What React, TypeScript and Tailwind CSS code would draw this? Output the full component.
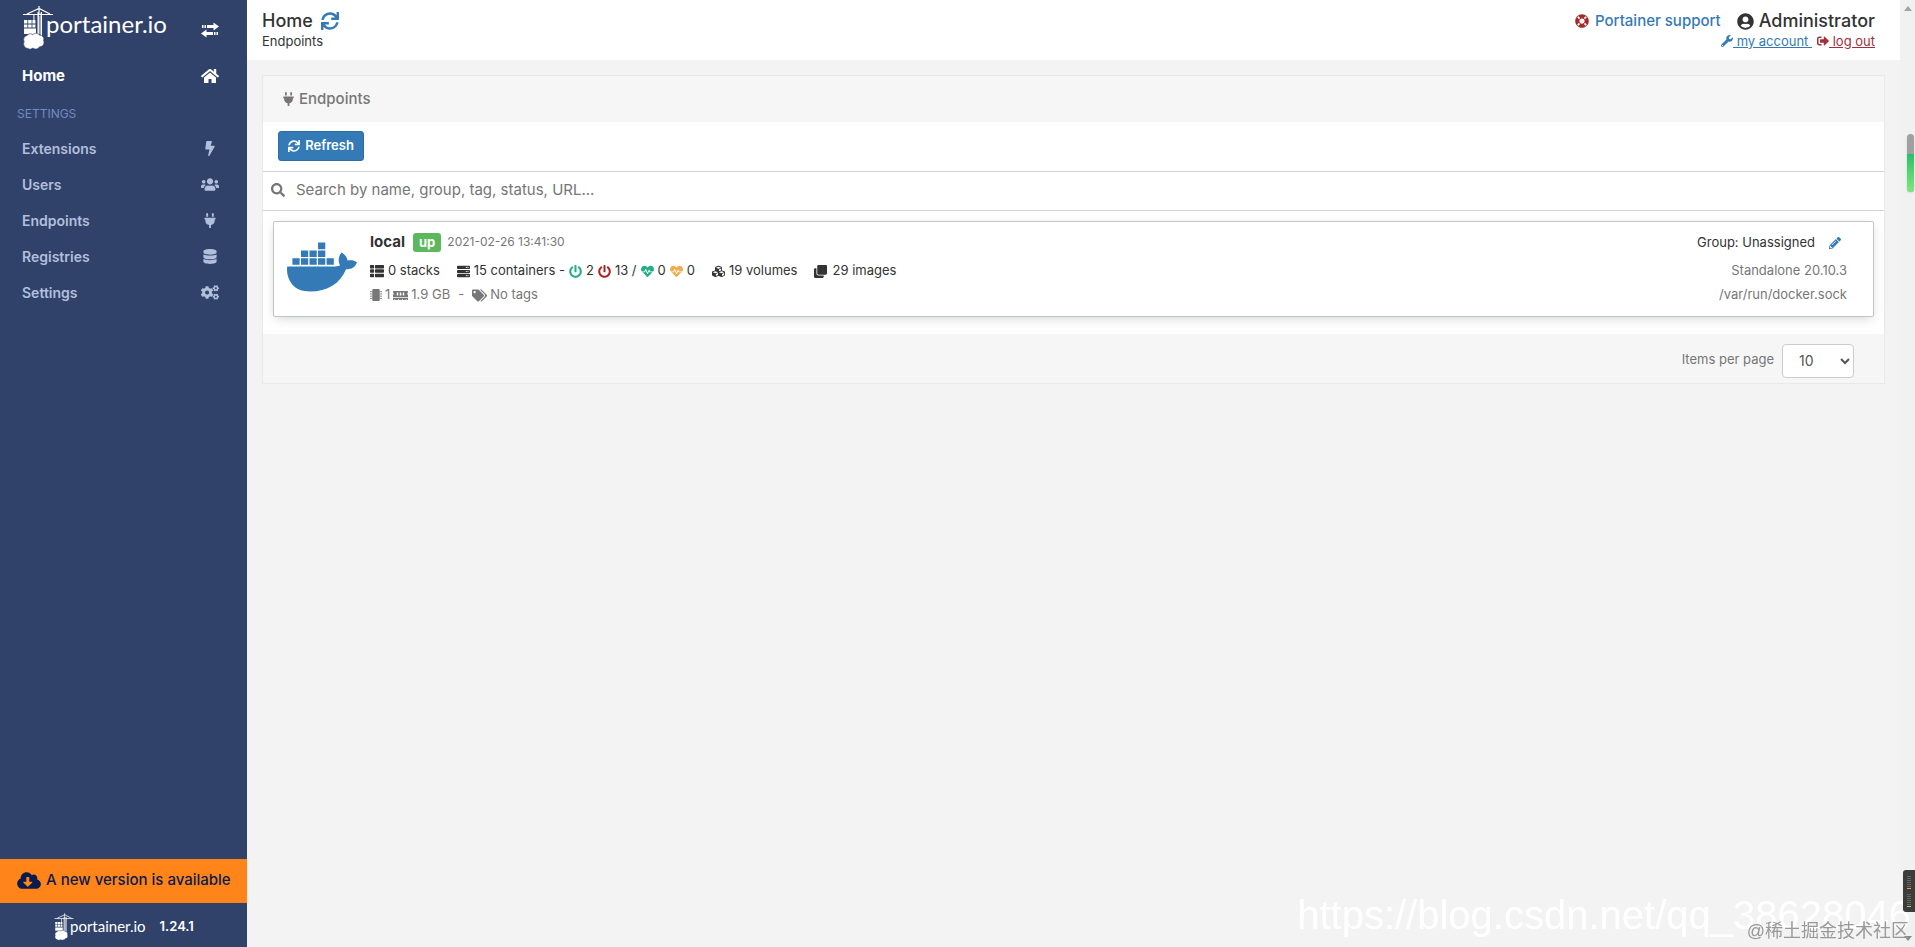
import React from "react";
import {
	FaBolt,
	FaClone,
	FaCloudDownloadAlt,
	FaCogs,
	FaCubes,
	FaDatabase,
	FaDocker,
	FaHeartbeat,
	FaHome,
	FaLifeRing,
	FaMemory,
	FaMicrochip,
	FaPencilAlt,
	FaPlug,
	FaPowerOff,
	FaSearch,
	FaServer,
	FaSignOutAlt,
	FaSync,
	FaTags,
	FaThList,
	FaUserCircle,
	FaUsers,
	FaWrench,
} from "react-icons/fa";

const settingsLinks = [
	{ label: "Extensions", icon: FaBolt },
	{ label: "Users", icon: FaUsers },
	{ label: "Endpoints", icon: FaPlug },
	{ label: "Registries", icon: FaDatabase },
	{ label: "Settings", icon: FaCogs },
];

// Crane, container stack and cloud
function CraneMark({ className }: { className?: string }) {
	return (
		<svg viewBox="0 0 32 44" className={className} fill="#fff" aria-hidden="true">
			<path d="M17 0v8M1 8.5h30M5 8 17 2.5 28 8" stroke="#fff" strokeWidth="1.2" fill="none" />
			<path d="M15.5 6h1.4v24h-1.4zM18.6 6H20v24h-1.4z" />
			<path d="M17 10h1.6v18H17z" opacity="0.45" />
			<path d="M11.4 9h1v5h-1z" />
			<path d="M2 14h3.4v3.6H2zM6.2 14h3.4v3.6H6.2zM10.4 14h3v3.6h-3zM2 18.4h3.4v3.2H2zM6.2 18.4h3.4v3.2H6.2zM10.4 18.4h3v3.2h-3zM2 22.6h12V28H2z" />
			<path
				d="M6 42.500a4.600 4.600 0 0 1-3.800-6.800A4.300 4.300 0 0 1 5 29.400c1.600-2 4.200-2 5.800-.9 2.200-1.900 5.400-1.500 6.800.7 3.200 0 4.900 2.700 3.900 5.200 1.500 3.200-.5 6.500-3.900 6.300-1.700 2.800-5 2.700-6.700 1.300-1.500 1.300-3.500 1.500-4.900.5z"
				stroke="#30426a"
				strokeWidth="0.6"
			/>
		</svg>
	);
}

function TransferIcon() {
	return (
		<svg viewBox="0 0 18 16" className="w-[18px] h-[16px]" fill="#fff" aria-hidden="true">
			<path d="M1 3h1.5v3H1zM3.5 3H5v3H3.5zM6 3h6.500V.5L18 4.500l-5.500 4V6H6z" />
			<path d="M17 10h-1.500v3H17zM14.500 10H13v3h1.500zM12 10H5.500V7.500L0 11.500l5.500 4V13H12z" />
		</svg>
	);
}

function Sidebar() {
	return (
		<nav className="w-[247px] shrink-0 flex flex-col bg-[#30426a] text-[#b2bfdc]">
			<div className="h-[58px] pl-[22px] pr-7 flex items-start justify-between text-white">
				<a href="#" className="flex items-start pt-1.5">
					<CraneMark className="w-[32px] h-[44px]" />
					<span className="-ml-2 text-[24px] leading-[36px] font-['Lato',sans-serif]">portainer.io</span>
				</a>
				<button type="button" aria-label="Toggle sidebar" className="mt-[22px]">
					<TransferIcon />
				</button>
			</div>
			<a href="#" className="h-9 pl-[22px] pr-7 flex items-center justify-between text-[15px] font-bold text-white">
				Home
				<FaHome className="w-[18px] h-[16px]" />
			</a>
			<div className="h-9 pt-1 pl-[17px] flex items-center text-[12px] text-[#738bc0]">SETTINGS</div>
			{settingsLinks.map(({ label, icon: Icon }) => (
				<a
					key={label}
					href="#"
					className="h-9 pl-[22px] pr-7 flex items-center justify-between text-[14px] font-semibold"
				>
					{label}
					<span className="w-[18px] flex justify-center">
						<Icon className="w-[18px] h-[15px]" />
					</span>
				</a>
			))}

			<div className="mt-auto">
				<a href="#" className="h-11 pb-0.5 pl-[17px] flex items-center gap-[5px] bg-[#ff851b] text-[15px] font-medium text-[#0a1b4d]">
					<FaCloudDownloadAlt className="w-[24px] h-[19px] shrink-0" />
					<span className="whitespace-nowrap">A new version is available</span>
				</a>
				<div className="h-11 pl-[54px] flex items-start text-white">
					<CraneMark className="mt-2.5 w-[20px] h-[28px]" />
					<span className="-ml-1 text-[15px] leading-[46px] font-['Lato',sans-serif]">portainer.io</span>
					<span className="ml-3.5 text-[13px] leading-[46px] font-semibold">1.24.1</span>
				</div>
			</div>
		</nav>
	);
}

function PageHeader() {
	return (
		<header className="h-[60px] px-[15px] pr-[25px] flex justify-between bg-white">
			<div className="pt-2">
				<h1 className="flex items-center gap-2 text-[18px] leading-[26px] font-medium">
					Home
					<a href="#" aria-label="Reload">
						<FaSync className="w-[18px] h-[18px] text-[#337ab7]" />
					</a>
				</h1>
				<p className="text-[13px] leading-[14px]">Endpoints</p>
			</div>
			<div className="pt-2 flex flex-col items-end">
				<div className="flex items-center gap-4">
					<a href="#" className="flex items-center gap-1.5 text-[15px] leading-[26px] font-medium text-[#337ab7]">
						<FaLifeRing className="w-[14px] h-[14px] text-[#a52a2a]" />
						Portainer support
					</a>
					<div className="flex items-center gap-[5px] text-[18px] leading-[26px] font-medium">
						<FaUserCircle className="w-[17px] h-[17px]" />
						Administrator
					</div>
				</div>
				<div className="flex gap-[5px] text-[13px] leading-[14px]">
					<a href="#" className="flex items-center text-[#337ab7] underline">
						<FaWrench className="w-[12px] h-[12px]" />
						<span className="whitespace-pre"> my account </span>
					</a>
					<a href="#" className="flex items-center text-[#a33038] underline">
						<FaSignOutAlt className="w-[12px] h-[12px]" />
						<span className="whitespace-pre"> log out</span>
					</a>
				</div>
			</div>
		</header>
	);
}

function EndpointItem() {
	return (
		<article className="h-[96px] pl-[13px] pr-[26px] pb-1 flex items-center bg-white border border-[#c4c4c4] rounded-[2px] shadow-[0_3px_10px_-2px_rgba(161,170,166,0.5)]">
			<FaDocker className="w-[70px] h-[70px] shrink-0 text-[#337ab7]" />
			<div className="ml-[13px] grow flex flex-col text-[13px] text-[#333]">
				<div className="h-[28px] pb-0.5 flex items-center">
					<span className="text-[15px] font-bold">local</span>
					<span className="ml-2 px-1.5 h-[19px] rounded-[3px] bg-[#5cb85c] text-[13px] leading-[19px] font-bold text-white">up</span>
					<span className="ml-1.5 text-[12px] text-[#777]">2021-02-26 13:41:30</span>
				</div>
				<div className="h-[28px] flex items-center gap-[17px]">
					<span className="flex items-center gap-1">
						<FaThList className="w-[14px] h-[14px]" />0 stacks
					</span>
					<span className="flex items-center gap-1">
						<FaServer className="w-[13px] h-[13px]" />
						<span>15 containers -</span>
						<FaPowerOff className="w-[13px] h-[13px] text-[#23ae89]" />2
						<FaPowerOff className="w-[13px] h-[13px] text-[#ae2323]" />13 /
						<FaHeartbeat className="w-[13px] h-[13px] text-[#23ae89]" />0
						<FaHeartbeat className="w-[13px] h-[13px] text-[#f0ad4e]" />0
					</span>
					<span className="flex items-center gap-1">
						<FaCubes className="w-[13px] h-[13px]" />19 volumes
					</span>
					<span className="flex items-center gap-[5px]">
						<FaClone className="w-[13px] h-[13px]" />29 images
					</span>
				</div>
				<div className="h-5 flex items-center gap-[3px] text-[13px] text-[#777]">
					<FaMicrochip className="w-[12px] h-[12px]" />1
					<FaMemory className="w-[15px] h-[13px]" />1.9 GB
					<span className="px-[5px]">-</span>
					<FaTags className="w-[15px] h-[13px]" />No tags
				</div>
			</div>
			<div className="flex flex-col items-end text-[13px] text-[#777]">
				<div className="h-[28px] pr-1.5 flex items-center gap-3.5 text-[#333]">
					Group: Unassigned
					<a href="#" aria-label="Edit endpoint">
						<FaPencilAlt className="w-[12px] h-[12px] text-[#337ab7]" />
					</a>
				</div>
				<div className="h-[28px] flex items-center">Standalone 20.10.3</div>
				<div className="h-5 flex items-center">/var/run/docker.sock</div>
			</div>
		</article>
	);
}

function EndpointsWidget() {
	return (
		<section className="mx-[15px] mt-[15px] border border-[#e9e9e9] bg-white">
			<h2 className="h-[46px] pl-5 flex items-center gap-[5px] bg-[#f6f6f6] text-[15px] font-medium text-[#767676]">
				<FaPlug className="w-[11px] h-[14px]" />
				Endpoints
			</h2>
			<div className="h-[50px] pb-0.5 pl-[15px] flex items-center border-b border-[#d2d3d4]">
				<button
					type="button"
					className="h-[30px] w-[86px] flex items-center justify-center gap-[5px] rounded-[3px] border border-[#2e6da4] bg-[#337ab7] text-[13px] font-semibold text-white"
				>
					<FaSync className="w-[12px] h-[12px]" />
					Refresh
				</button>
			</div>
			<div className="h-[39px] pb-0.5 pl-2 flex items-center gap-[11px] border-b border-[#d2d3d4]">
				<FaSearch className="w-[14px] h-[14px] text-[#767676]" />
				<input
					type="text"
					aria-label="Search endpoints"
					placeholder="Search by name, group, tag, status, URL..."
					className="grow bg-transparent text-[15px] text-[#555] placeholder:text-[#767676] outline-none"
				/>
			</div>
			<div className="px-2.5 pt-2.5 pb-[17px]">
				<EndpointItem />
			</div>
			<div className="h-[49px] pt-1 pr-[30px] flex items-center justify-end gap-2 bg-[#f6f6f6] text-[#767676]">
				<label htmlFor="page-size" className="pb-0.5 text-[13px]">
					Items per page
				</label>
				<select
					id="page-size"
					defaultValue="10"
					className="w-[72px] h-[34px] pl-3 rounded-[4px] border border-[#ccc] bg-white text-[14px] text-[#555]"
				>
					<option>10</option>
					<option>25</option>
					<option>50</option>
					<option>100</option>
				</select>
			</div>
		</section>
	);
}

function ScrollTrack() {
	return (
		<div className="w-[15px] shrink-0 flex flex-col items-center justify-between py-1.5 bg-[#f1f1f1]">
			<svg viewBox="0 0 8 5" className="w-2 h-[5px]" fill="#a3a3a3" aria-hidden="true">
				<path d="M0 5 4 0l4 5z" />
			</svg>
			<svg viewBox="0 0 8 5" className="w-2 h-[5px]" fill="#8a8a8a" aria-hidden="true">
				<path d="M0 0h8L4 5z" />
			</svg>
		</div>
	);
}

// Meters that float over the right edge of the window
function EdgeMeters() {
	return (
		<>
			<div className="fixed right-px top-[134px] w-[7px] h-[58px] rounded-full overflow-hidden bg-[#a0a0a0] shadow">
				<div className="mt-5 h-[38px] bg-linear-to-b from-[#22c067] to-[#7be87d]" />
			</div>
			<div className="fixed right-0 bottom-[35px] w-3 h-[42px] rounded-l-[3px] bg-[#3c3c3c]">
				<svg viewBox="0 0 12 42" className="w-3 h-[42px]" aria-hidden="true">
					<path d="M4 6.500h4M4 8.500h4M4 10.500h4M4 12.500h4M4 14.500h4M4 16.500h4M4 24.500h4M4 26.500h4M4 28.500h4M4 30.500h4M4 32.500h4M4 34.500h4" stroke="#666" />
					<path d="M4 18.500h4" stroke="#f09a55" />
					<path d="M4 36.500h4" stroke="#8fdc5a" />
				</svg>
			</div>
		</>
	);
}

export default function App() {
	return (
		<div className="min-h-screen flex bg-[#f3f3f3] font-['Inter',sans-serif] text-[#333]">
			<Sidebar />
			<main className="grow min-w-0">
				<PageHeader />
				<EndpointsWidget />
			</main>
			<ScrollTrack />
			<div className="fixed right-1 bottom-1 whitespace-nowrap text-[40px] leading-[56px] text-white font-['Liberation_Sans',sans-serif]">
				https://blog.csdn.net/qq_38628046
			</div>
			<div className="fixed right-1.5 bottom-1 whitespace-nowrap text-[18px] leading-6 text-[#999] font-['Liberation_Sans','Noto_Sans_CJK_SC',sans-serif]">
				@稀土掘金技术社区
			</div>
			<EdgeMeters />
		</div>
	);
}
